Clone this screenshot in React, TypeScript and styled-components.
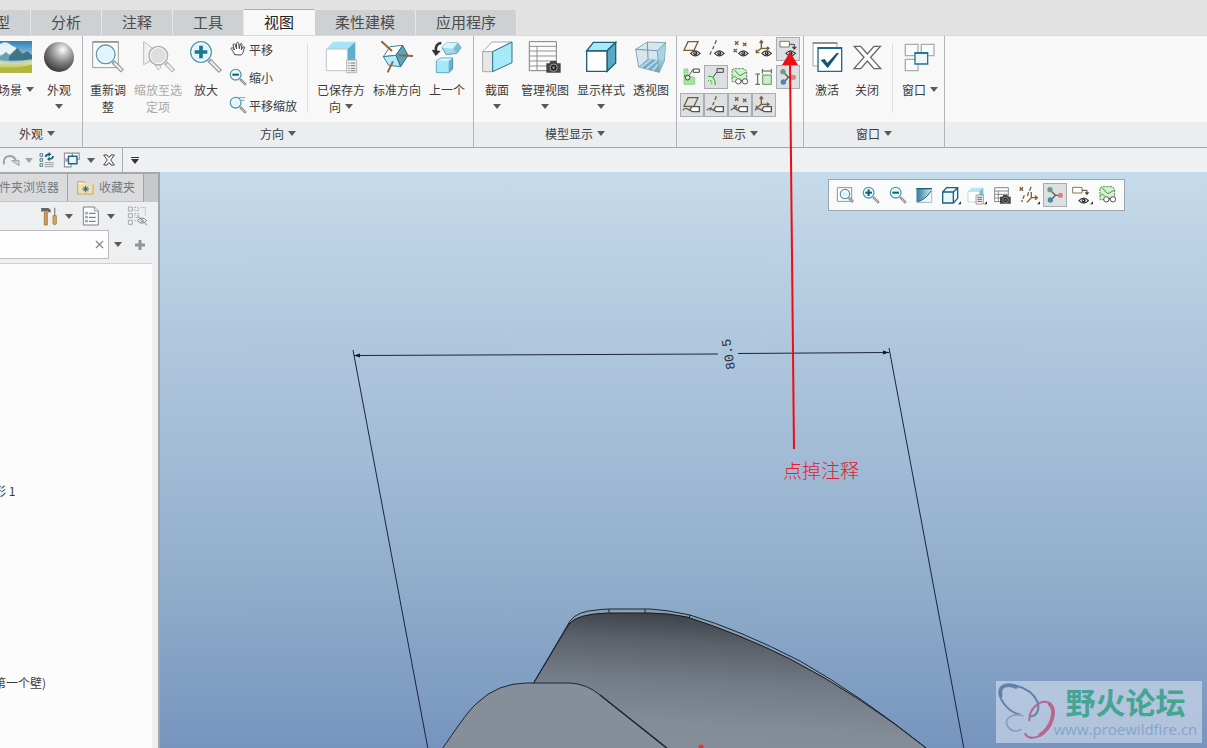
import React from 'react';
import styled, { createGlobalStyle, css } from 'styled-components';

const GlobalStyle = createGlobalStyle`
  *, *::before, *::after { box-sizing: border-box; }
  body {
    margin: 0;
    overflow: hidden;
    background: #e2e2e2;
    font-family: "Noto Sans CJK SC", "Noto Sans", sans-serif;
    font-size: 12px;
    color: #3c3c3c;
  }
  button, input {
    font: inherit;
    color: inherit;
    margin: 0;
    padding: 0;
    border: 0;
    border-radius: 0;
    background: none;
  }
  svg { display: block; flex: none; }
`;

/* ---------- layout ---------- */

const Page = styled.div`
  display: flex;
  flex-direction: column;
  min-height: 100vh;
`;

const TabBar = styled.nav`
  display: flex;
  align-items: flex-end;
  height: 35px;
  background: #e2e2e2;
`;

const RibbonTab = styled.button<{ $width: number; $active?: boolean; $cut?: boolean }>`
  display: flex;
  justify-content: ${p => (p.$cut ? 'flex-end' : 'center')};
  align-items: center;
  flex: none;
  width: ${p => p.$width}px;
  height: ${p => (p.$active ? 26 : 25)}px;
  padding: 0 ${p => (p.$cut ? 20 : 0)}px 3px 0;
  overflow: hidden;
  white-space: nowrap;
  font-size: 15px;
  color: ${p => (p.$active ? '#222' : '#4c4c4c')};
  background: ${p => (p.$active ? '#f8f8f8' : '#cdd1d4')};
  border-right: 1px solid ${p => (p.$active ? '#f8f8f8' : '#e6e7e8')};
  border-top: ${p => (p.$active ? '1px solid #a9abae' : '0')};
`;

const Ribbon = styled.div`
  display: flex;
  height: 113px;
  background: linear-gradient(#f8f8f8 86px, #ecedef 86px);
  border-top: 1px solid #d6d8da;
  border-bottom: 1px solid #a2a4a8;
`;

const Group = styled.section<{ $cut?: boolean }>`
  display: flex;
  flex-direction: column;
  flex: none;
  margin-left: ${p => (p.$cut ? -8 : 0)}px;
  border-right: 1px solid #b1b4b8;
`;

const GroupBody = styled.div<{ $left: number; $right: number }>`
  display: flex;
  gap: 4px;
  height: 86px;
  padding: 0 ${p => p.$right}px 0 ${p => p.$left}px;
`;

const GroupTitle = styled.button`
  display: flex;
  align-items: center;
  justify-content: center;
  gap: 4px;
  height: 23px;
`;

const BigButton = styled.button<{ $width: number }>`
  display: flex;
  flex-direction: column;
  align-items: center;
  flex: none;
  width: ${p => p.$width}px;
  padding-top: 4px;
  line-height: 17px;
  &:disabled { color: #a9a9a9; }
`;

const BigLabel = styled.span`
  display: flex;
  flex-direction: column;
  align-items: center;
  padding-top: 7px;
  white-space: nowrap;
`;

const LabelLine = styled.span`
  display: flex;
  align-items: center;
  justify-content: center;
  gap: 4px;
  height: 17px;
`;

const SmallColumn = styled.div`
  display: flex;
  flex-direction: column;
  width: 70px;
`;

const SmallButton = styled.button`
  display: flex;
  align-items: center;
  gap: 2px;
  height: 28px;
  padding-bottom: 2px;
  white-space: nowrap;
`;

const Divider = styled.div`
  width: 1px;
  height: 70px;
  margin: 7px 4px 0;
  background: #dcdee0;
`;

const ToggleGrid = styled.div`
  display: grid;
  grid-template-columns: repeat(5, 24px);
  grid-auto-rows: 24px;
  row-gap: 4px;
  padding-top: 1px;
`;

const Toggle = styled.button<{ $on?: boolean }>`
  display: grid;
  place-items: center;
  width: 24px;
  height: 24px;
  ${p => p.$on && css`
    background: #dde0e3;
    box-shadow: inset 0 0 0 1px #a9acb0;
  `}
`;

const Anchor = styled.div`
  position: relative;
`;

const Pointer = styled.svg`
  position: absolute;
  top: 0;
  left: 0;
  z-index: 5;
  pointer-events: none;
`;

const PointerText = styled.span`
  position: absolute;
  top: 419px;
  left: 7px;
  z-index: 5;
  white-space: nowrap;
  font-size: 19px;
  line-height: 28px;
  font-weight: 300;
  color: #e0202c;
`;

const QuickBar = styled.div`
  display: flex;
  align-items: center;
  height: 24px;
  background: #eff0f2;
`;

const QuickButton = styled.button<{ $width: number }>`
  display: grid;
  place-items: center;
  flex: none;
  width: ${p => p.$width}px;
  height: 24px;
`;

const QuickDivider = styled.div`
  width: 1px;
  height: 24px;
  background: #a9acb0;
`;

const Workspace = styled.div`
  display: flex;
  flex: 1;
`;

const SidePanel = styled.aside`
  display: flex;
  flex-direction: column;
  flex: none;
  width: 160px;
  background: #eeeff1;
  border-top: 2px solid #a6a8ab;
  border-right: 2px solid #a3a6ab;
`;

const PanelTabs = styled.div`
  display: flex;
  height: 28px;
  background: #c6c9cc;
`;

const PanelTab = styled.button<{ $width: number }>`
  display: flex;
  align-items: center;
  justify-content: flex-end;
  gap: 5px;
  flex: none;
  width: ${p => p.$width}px;
  padding: 0 8px 2px 0;
  overflow: hidden;
  white-space: nowrap;
  color: #77797c;
  background: #dadbdd;
  border-right: 1px solid #9fa2a5;
  border-bottom: 1px solid #c0c2c5;
`;

const PanelTools = styled.div`
  display: flex;
  align-items: center;
  height: 28px;
  padding-left: 36px;
`;

const SearchRow = styled.div`
  display: flex;
  align-items: center;
  height: 29px;
`;

const SearchField = styled.div`
  display: flex;
  align-items: center;
  width: 109px;
  height: 29px;
  background: #fdfdfd;
  border: 1px solid #b9bbbe;
  border-left: 0;
`;

const SearchInput = styled.input`
  flex: 1;
  min-width: 0;
  height: 27px;
  outline: none;
`;

const Tree = styled.ul`
  flex: 1;
  margin: 4px 6px 0 0;
  padding: 215px 0 0;
  overflow: hidden;
  list-style: none;
  background: #fdfcfd;
  border-top: 1px solid #cfd1d3;
`;

const TreeItem = styled.li<{ $skip?: boolean }>`
  height: 24px;
  margin: ${p => (p.$skip ? 168 : 0)}px 0 0 -6px;
  line-height: 24px;
  white-space: nowrap;
`;

const Viewport = styled.main`
  position: relative;
  display: flex;
  flex: 1;
  min-width: 0;
  overflow: hidden;
  background: linear-gradient(#c6dbea, #b0c8de 28%, #a0bad5 52%, #8eabc9 74%, #7794bf);
`;

const Scene = styled.svg`
  flex: 1;
  min-width: 0;
`;

const FloatBar = styled.div`
  position: absolute;
  top: 7px;
  left: 668px;
  display: flex;
  align-items: center;
  width: 297px;
  height: 32px;
  padding: 0 3px;
  background: #f9fafa;
  border: 1px solid #9ba5b0;
`;

const FloatSlot = styled.div`
  display: flex;
  justify-content: center;
  flex: 1;
`;

const Watermark = styled.div`
  position: absolute;
  right: 5px;
  bottom: 5px;
  display: flex;
  width: 206px;
  height: 62px;
  background: rgba(228, 236, 248, 0.52);
`;

const WatermarkText = styled.div`
  display: flex;
  flex-direction: column;
  align-items: center;
  flex: 1;
  padding-right: 4px;
`;

const WatermarkName = styled.strong`
  font-size: 30px;
  line-height: 40px;
  font-weight: 700;
  color: #46a592;
`;

const WatermarkUrl = styled.a`
  font-family: "Open Sans", sans-serif;
  font-size: 15px;
  line-height: 17px;
  color: #86a3c9;
  text-decoration: none;
`;

/* ---------- icons ---------- */

const Caret = ({ color = '#5a5a5a' }: { color?: string }) => (
  <svg width="8" height="5" viewBox="0 0 8 5"><path d="M0 0h8L4 5z" fill={color} /></svg>
);

const Big = ({ children }: { children: React.ReactNode }) => (
  <svg width="34" height="34" viewBox="0 0 102 102">{children}</svg>
);

const Tile = ({ children }: { children: React.ReactNode }) => (
  <svg width="24" height="24" viewBox="0 0 72 72" fill="none">{children}</svg>
);

const Lens = ({ x, y, r, len, gray, fill }: { x: number; y: number; r: number; len: number; gray?: boolean; fill?: string }) => {
  const s = r * 0.72;
  const w = r > 20 ? 13 : 8;
  return (
    <g>
      <path d={`M${x + s + 2} ${y + s + 2}l${len} ${len}`} stroke={gray ? '#b0b0b0' : '#8f8f8f'} strokeWidth={w} />
      <path d={`M${x + s + 5} ${y + s + 5}l${len - 5} ${len - 5}`} stroke="#ececec" strokeWidth={w - 6} />
      <circle cx={x} cy={y} r={r} fill={fill ?? (gray ? '#dedede' : '#dff5fd')} stroke={gray ? '#adadad' : '#5a98ae'} strokeWidth={4} />
      <circle cx={x} cy={y} r={r - 4} fill="none" stroke="#fff" strokeWidth="3" opacity="0.8" />
    </g>
  );
};

const SceneIcon = () => (
  <Big>
    <defs>
      <linearGradient id="sky" x2="0" y2="1"><stop stopColor="#2d7fb8" /><stop offset="1" stopColor="#cdeaf5" /></linearGradient>
      <linearGradient id="field" x2="0" y2="1"><stop stopColor="#dfe5a6" /><stop offset="1" stopColor="#a3b13c" /></linearGradient>
    </defs>
    <path d="M3 3h96v66H3z" fill="url(#sky)" />
    <path d="M3 12q18-12 34 4l16 8-10 20H3z" fill="#fff" opacity="0.85" />
    <path d="M3 50l18-14 10 8 24-20 18 16 12-6 14 12v26H3z" fill="#6a9fae" />
    <path d="M30 52l25-28 14 18 16-8 14 12v20H30z" fill="#3f7486" />
    <path d="M3 60q40 6 96-2v14H3z" fill="#a9cfd9" />
    <path d="M3 65q45 8 96-1v35H3z" fill="url(#field)" />
    <path d="M3 82q50 4 96-8v25H3z" fill="#b0b63f" />
  </Big>
);

const SphereIcon = () => (
  <Big>
    <defs>
      <radialGradient id="ball" cx="0.62" cy="0.26" r="0.75">
        <stop stopColor="#fff" /><stop offset="0.25" stopColor="#c4c4c4" /><stop offset="0.6" stopColor="#7c7c7c" /><stop offset="1" stopColor="#3a3a3a" />
      </radialGradient>
    </defs>
    <circle cx="51" cy="51" r="45" fill="url(#ball)" />
  </Big>
);

const RefitIcon = () => (
  <Big>
    <path d="M5 5h77v78H5z" fill="#fafafa" stroke="#9c9c9c" strokeWidth="3" />
    <path d="M5 6h77" stroke="#8a8a8a" strokeWidth="4" />
    <Lens x={44} y={43} r={28} len={28} />
  </Big>
);

const ZoomSelectedIcon = () => (
  <Big>
    <path d="M8 5l60 44-22 4 14 30-9 7-17-30L8 74z" fill="#f0f0f0" stroke="#bcbcbc" strokeWidth="3" />
    <Lens x={52} y={47} r={28} len={24} gray />
  </Big>
);

const ZoomInIcon = () => (
  <Big>
    <Lens x={36} y={36} r={31} len={34} />
    <path d="M36 17v38M17 36h38" stroke="#1f7590" strokeWidth="11" />
  </Big>
);

const SavedIcon = () => (
  <Big>
    <path d="M7 27L28 5h66L70 27z" fill="#a5e4f4" />
    <path d="M70 27L94 5v64L70 92z" fill="#5fb0cc" />
    <path d="M7 27h63v65H7z" fill="#fefefe" stroke="#b9c6cf" strokeWidth="3" />
    <path d="M68 60h30v38H68z" fill="#f2f2f2" stroke="#999" strokeWidth="2" />
    <path d="M73 69h4M80 69h14M73 77h4M80 77h14M73 85h4M80 85h14M73 92h4M80 92h14" stroke="#777" strokeWidth="3" />
  </Big>
);

const StandardIcon = () => (
  <Big>
    <path d="M10 50L30 20l38-4-20 30z" fill="#fdfdfd" stroke="#3f8297" strokeWidth="3" strokeLinejoin="round" />
    <path d="M10 50l38-4 14 34-36-4z" fill="#b4ebf9" stroke="#3f8297" strokeWidth="3" strokeLinejoin="round" />
    <path d="M48 46l20-30 16 30-22 34z" fill="#5ba3bc" stroke="#2b6f87" strokeWidth="3" strokeLinejoin="round" />
    <path d="M4 4l32 29M56 46l43 2M39 64L23 97" stroke="#8a6a3c" strokeWidth="6" />
  </Big>
);

const PreviousIcon = () => (
  <Big>
    <path d="M34 9Q16 10 17 34" fill="none" stroke="#333" strokeWidth="8" />
    <path d="M5 29l27 4-15 15z" fill="#333" />
    <path d="M36 23l15-16 32 2 10 14-12 17-32 4z" fill="#9fdcf1" stroke="#5d9fb5" strokeWidth="3" />
    <path d="M36 23l15-16 32 2-14 17z" fill="#d5f3fb" />
    <path d="M69 26l14-17 10 14-12 17z" fill="#7bbdd4" />
    <path d="M19 63l14-9h35v33L56 98H19z" fill="#68b2cb" stroke="#4696b0" strokeWidth="3" />
    <path d="M20 63h36v34H20z" fill="#a5e8fa" />
    <path d="M20 63l13-8h34l-11 8z" fill="#d3f4fc" />
  </Big>
);

const SectionIcon = () => (
  <Big>
    <path d="M8 35L36 6h60L38 35z" fill="#fdfdfd" stroke="#a5a9ac" strokeWidth="3" />
    <path d="M8 35h30v60H8z" fill="#e8e6e4" stroke="#a5a9ac" strokeWidth="3" />
    <path d="M38 35L96 6v62L38 95z" fill="#a5e9fb" stroke="#2f6f85" strokeWidth="3" />
  </Big>
);

const CameraShape = ({ x, y, k = 1 }: { x: number; y: number; k?: number }) => (
  <g transform={`translate(${x} ${y}) scale(${k})`}>
    <path d="M0 7h9l4-7h16l4 7h10v28H0z" fill="#444" />
    <circle cx="22" cy="20" r="11" fill="#222" stroke="#aaa" strokeWidth="3" />
    <circle cx="22" cy="20" r="4" fill="#888" />
  </g>
);

const ManageIcon = () => (
  <Big>
    <path d="M4 5h81v87H4z" fill="#fcfcfc" stroke="#7c8085" strokeWidth="3" />
    <path d="M4 19h81M4 33h81M4 48h81M4 63h81M4 78h60M27 19v73" stroke="#8d9195" strokeWidth="3" />
    <CameraShape x={55} y={63} />
  </Big>
);

const DisplayIcon = () => (
  <Big>
    <path d="M8 33L28 7h67L69 33z" fill="#a5e9fb" stroke="#225f75" strokeWidth="4" />
    <path d="M69 33L95 7v62L69 94z" fill="#58a9c4" stroke="#225f75" strokeWidth="4" />
    <path d="M8 33h61v61H8z" fill="#fff" stroke="#225f75" strokeWidth="4" />
  </Big>
);

const PerspectiveIcon = () => (
  <Big>
    <path d="M5 28L40 6l55 2-4 55-15 34-62-16z" fill="#d5e6ee" stroke="#8aa5b3" strokeWidth="3" />
    <path d="M14 80l28-24 47 6-13 35z" fill="#5c9cb5" opacity="0.8" />
    <path d="M20 82l32-24M38 86l32-26M56 91l26-30" stroke="#b7d7e4" strokeWidth="6" />
    <path d="M5 28l65 4 25-24M70 32l6 65M40 6l2 50" fill="none" stroke="#7696a6" strokeWidth="3" />
    <path d="M70 32l25-24-4 55-15 34z" fill="#8ecbdf" opacity="0.65" />
  </Big>
);

const ActivateIcon = () => (
  <Big>
    <path d="M9 8h72v70H9z" fill="#fff" stroke="#a4a6a8" strokeWidth="3" />
    <path d="M8 9h74" stroke="#909294" strokeWidth="6" />
    <path d="M24 23h71v71H24z" fill="#fff" stroke="#1f6a87" strokeWidth="4" />
    <path d="M23 24h73" stroke="#1f6a87" strokeWidth="6" />
    <path d="M32 60l12-3 8 12 28-30h7L53 85z" fill="#15536f" />
  </Big>
);

const CloseIcon = () => (
  <Big>
    <path d="M13 19h19l20 23 20-23h19L62 52l30 34H72L52 63 32 86H12l30-34z" fill="#fff" stroke="#666" strokeWidth="4" />
  </Big>
);

const WindowsShape = () => (
  <g fill="#fbfbfb" strokeWidth="4">
    <path d="M7 13h38v34H7zM55 13h38v34H55zM7 58h38v34H7z" stroke="#aaadb0" />
    <path d="M36 38h38v34H36z" fill="#eaf7fc" stroke="#2a738e" />
    <path d="M35 39h40" stroke="#2a738e" strokeWidth="6" />
  </g>
);

const HandIcon = () => (
  <svg width="18" height="18" viewBox="-3 -3 54 54" fill="#fff" stroke="#444" strokeWidth="3" strokeLinejoin="round">
    <path d="M14 41C12 34 6 28 3 22c2-4 6-2 10 5L9 11c2-4 6-3 7 1l4 12-1-17c2-4 6-4 7 0l2 16 3-14c3-3 6-1 5 2l-2 15 5-8c4-2 6 0 4 3-3 10-4 17-10 21z" />
  </svg>
);

const SmallLens = ({ kind }: { kind: 'in' | 'out' | 'pan' | 'fit' }) => (
  <svg width="18" height="18" viewBox="0 0 54 54" fill="none">
    {kind === 'fit' && <path d="M4 5h43v41H4z" fill="#fff" stroke="#8e9194" strokeWidth="3" />}
    <Lens x={kind === 'fit' ? 27 : 20} y={kind === 'fit' ? 24 : 20} r={kind === 'fit' ? 14 : 16} len={kind === 'fit' ? 12 : 17} />
    {kind === 'pan' && <path d="M27 5h22M32 13h14" stroke="#6fb0c8" strokeWidth="3" />}
    {(kind === 'out' || kind === 'in') && <path d="M10 20h20" stroke="#14607a" strokeWidth="6" />}
    {kind === 'in' && <path d="M20 10v20" stroke="#14607a" strokeWidth="6" />}
  </svg>
);

const Eye = ({ x, y }: { x: number; y: number }) => (
  <g transform={`translate(${x} ${y})`}>
    <path d="M-14 0Q0-15 14 0Q0 15-14 0z" fill="#fff" stroke="#3c3c3c" strokeWidth="4" />
    <circle r="6" fill="#2c2c2c" /><circle cx="-1" cy="-1" r="2" fill="#fff" />
  </g>
);

const Tag = () => (
  <g strokeWidth="4">
    <path d="M8 52q9-10 16-3t14 0" stroke="#666" />
    <path d="M36 41h22v15H36l-6-7z" fill="#fff" stroke="#555" />
  </g>
);

const Plane = () => <path d="M24 14h30L42 40H12z" stroke="#7b5f38" strokeWidth="4" />;
const Axis = () => <path d="M37 10l-4 11M30 27l-4 10M22 43l-4 10" stroke="#7b5f38" strokeWidth="4" />;
const Points = () => <path d="M21 13l10 10m0-10L21 23M45 17l10 10m0-10L45 27M17 36l10 10m0-10L17 46" stroke="#7b5f38" strokeWidth="4" />;
const Csys = () => <path d="M28 12v22L12 46M28 34h22M23 18l5-7 5 7M45 29l6 5-6 5M13 38v9h9" stroke="#7b5f38" strokeWidth="4" />;

const Glasses = () => (
  <g fill="#fff" stroke="#555" strokeWidth="3"><circle cx="31" cy="49" r="8" /><circle cx="51" cy="49" r="8" /><path d="M39 46h4" /></g>
);
const GreenModel = () => (
  <Tile>
    <path d="M12 15l6-4h31l7 8v31H12z" fill="#d3f1cf" stroke="#57855a" strokeWidth="3" strokeDasharray="7 3" />
    <path d="M12 38q8-8 14 0M26 24l10 8 18-10M18 14l10 10" stroke="#4c9452" strokeWidth="3" />
    <Glasses />
  </Tile>
);
const SpinTile = () => (
  <Tile>
    <path d="M20 19l17 18-13 14M37 37h15" stroke="#555" strokeWidth="4" />
    <circle cx="21" cy="20" r="8" fill="#6f9d84" /><circle cx="22" cy="51" r="8" fill="#4589ab" /><circle cx="52" cy="37" r="8" fill="#d48580" />
  </Tile>
);
const NoteTile = () => (
  <Tile>
    <path d="M12 13h28v17H12z" fill="#fff" stroke="#91754c" strokeWidth="3" />
    <path d="M40 22h15v10" stroke="#444" strokeWidth="3" /><path d="M47 29h16l-8 10z" fill="#444" />
    <Eye x={44} y={49} />
  </Tile>
);
const WeldTile = () => (
  <Tile>
    <path d="M12 12h12v20l20 6v20H12z" fill="#a6e6a2" stroke="#79bd77" strokeWidth="2" />
    <path d="M12 33h14l13-20" stroke="#555" strokeWidth="3" /><circle cx="23" cy="38" r="7" fill="#d8f5d5" stroke="#444" strokeWidth="3" />
    <path d="M40 12h18v10H40z" fill="#fff" stroke="#444" strokeWidth="3" />
  </Tile>
);
const CurveTile = () => (
  <Tile>
    <path d="M12 34h22v26H22V46H12z" fill="#c9efc5" />
    <path d="M12 34q22-3 22 26" stroke="#3d9a43" strokeWidth="3" /><path d="M12 47h11v12" stroke="#4a9c50" strokeWidth="3" strokeDasharray="3 3" />
    <path d="M27 37l12-17V11h19v11H39" stroke="#444" strokeWidth="3" />
  </Tile>
);
const SizeTile = () => (
  <Tile>
    <path d="M32 30h26v28H32z" fill="#c7efc2" stroke="#6c8e6b" strokeWidth="3" />
    <path d="M10 27h14M10 58h14M17 28v29M31 18h27M31 12v14M58 12v14" stroke="#555" strokeWidth="3" />
  </Tile>
);
const Corner = () => <path d="M60 64h9v-9z" fill="#333" />;

const Pairs = {
  shade: <Tile><defs><linearGradient id="shade"><stop stopColor="#2c7a97" /><stop offset="1" stopColor="#d7edf5" /></linearGradient></defs><path d="M14 17h45v41H14z" fill="url(#shade)" stroke="#8aa" strokeWidth="2" /><path d="M16 56q24-5 41-34v34z" fill="#f3fafd" /><path d="M18 55q22-4 39-31" stroke="#235f78" strokeWidth="3" /><path d="M13 17h47" stroke="#245f77" strokeWidth="4" /></Tile>,
  cube: <Tile><path d="M14 27l12-13h33v32L46 60H14zM14 27h32v33M46 27l13-13" fill="#e9f8fd" stroke="#1f6078" strokeWidth="4" /><Corner /></Tile>,
  saved: <Tile><path d="M12 25l12-11h34L46 25z" fill="#b9e6f3" /><path d="M46 25l12-11v36L46 57z" fill="#7abdd2" /><path d="M12 25h34v32H12z" fill="#fff" stroke="#b4c5cd" strokeWidth="2" /><path d="M36 36h22v27H36z" fill="#f4f4f4" stroke="#777" strokeWidth="2" /><path d="M40 43h14M40 49h14M40 55h14" stroke="#666" strokeWidth="3" /><Corner /></Tile>,
  table: <Tile><path d="M11 14h41v42H11zM11 24h41M11 34h41M11 45h41M22 24v32" fill="#fff" stroke="#888" strokeWidth="3" /><CameraShape x={27} y={36} k={0.75} /></Tile>,
  datum: <Tile><path d="M8 13l10 10m0-10L8 23M42 11l-4 12M35 28l-4 11M22 37l-4 10M16 51l-2 6M43 27v17L30 58M43 44h17M54 38l7 6-7 6" stroke="#7b5f38" strokeWidth="4" /><Corner /></Tile>,
};

const DropX = () => (
  <svg width="14" height="14" viewBox="0 0 42 42"><path d="M5 6h10l6 8 6-8h10L26 21l11 15H27l-6-8-6 8H5l11-15z" fill="#fff" stroke="#444" strokeWidth="3" /></svg>
);

/* ---------- parts ---------- */

type BigItemProps = { icon: React.ReactNode; lines: string[]; width: number; caret?: 'inline' | 'below'; disabled?: boolean };

const BigItem = ({ icon, lines, width, caret, disabled }: BigItemProps) => (
  <BigButton $width={width} disabled={disabled}>
    {icon}
    <BigLabel>
      {lines.map((line, i) => (
        <LabelLine key={line}>{line}{caret === 'inline' && i === lines.length - 1 && <Caret />}</LabelLine>
      ))}
      {caret === 'below' && <LabelLine><Caret /></LabelLine>}
    </BigLabel>
  </BigButton>
);

const tabs = [
  { name: '模型', width: 31, cut: true },
  { name: '分析', width: 71 },
  { name: '注释', width: 71 },
  { name: '工具', width: 71 },
  { name: '视图', width: 71, active: true },
  { name: '柔性建模', width: 101 },
  { name: '应用程序', width: 101 },
];

const toggles: { name: string; icon: React.ReactNode; on?: boolean; pointed?: boolean }[] = [
  { name: '平面显示', icon: <Tile><Plane /><Eye x={46} y={49} /></Tile> },
  { name: '轴显示', icon: <Tile><Axis /><Eye x={46} y={49} /></Tile> },
  { name: '点显示', icon: <Tile><Points /><Eye x={46} y={49} /></Tile> },
  { name: '坐标系显示', icon: <Tile><Csys /><Eye x={44} y={49} /></Tile> },
  { name: '注释显示', icon: <NoteTile />, on: true, pointed: true },
  { name: '焊缝', icon: <WeldTile /> },
  { name: '曲线', icon: <CurveTile />, on: true },
  { name: '模型', icon: <GreenModel /> },
  { name: '尺寸', icon: <SizeTile /> },
  { name: '旋转中心', icon: <SpinTile />, on: true },
  { name: '平面标记', icon: <Tile><Plane /><Tag /></Tile>, on: true },
  { name: '轴标记', icon: <Tile><Axis /><Tag /></Tile>, on: true },
  { name: '点标记', icon: <Tile><Points /><Tag /></Tile>, on: true },
  { name: '坐标系标记', icon: <Tile><Csys /><Tag /></Tile>, on: true },
];

const floatTools: { name: string; icon: React.ReactNode; on?: boolean }[] = [
  { name: '重新调整', icon: <SmallLens kind="fit" /> },
  { name: '放大', icon: <SmallLens kind="in" /> },
  { name: '缩小', icon: <SmallLens kind="out" /> },
  { name: '重画', icon: Pairs.shade },
  { name: '显示样式', icon: Pairs.cube },
  { name: '已保存方向', icon: Pairs.saved },
  { name: '视图管理器', icon: Pairs.table },
  { name: '基准显示', icon: Pairs.datum },
  { name: '旋转中心', icon: <SpinTile />, on: true },
  { name: '注释显示', icon: <Tile><path d="M8 13h28v17H8z" fill="#fff" stroke="#91754c" strokeWidth="3" /><path d="M36 22h15v10" stroke="#444" strokeWidth="3" /><path d="M44 28h14l-7 9z" fill="#444" /><Eye x={41} y={53} /><Corner /></Tile> },
  { name: '模型显示', icon: <GreenModel /> },
];

const ModelScene = () => (
  <Scene viewBox="160 172 1047 576" preserveAspectRatio="xMinYMin slice">
    <defs>
      <linearGradient id="back" gradientUnits="userSpaceOnUse" x1="640" y1="609" x2="632" y2="748">
        <stop stopColor="#3b4047" /><stop offset="0.22" stopColor="#5a616a" /><stop offset="0.5" stopColor="#737b86" /><stop offset="0.8" stopColor="#828b96" /><stop offset="1" stopColor="#868f99" />
      </linearGradient>
    </defs>
    <path d="M533 684L570 621Q577 611 597 610Q604 609 610 609H650Q668 610 690 615Q740 630 800 661Q860 695 930 751H533z" fill="#8c9fb2" />
    <path d="M533 684L569 624Q577 614 607 613H650Q668 613 687 617Q740 634 790 659Q860 695 930 751H533z" fill="url(#back)" stroke="#15191f" />
    <path d="M533 684L570 621Q577 611 597 610Q604 609 610 609H650Q668 610 690 615Q740 630 800 661Q860 695 930 751" fill="none" stroke="#1b2734" />
    <path d="M609 609v4M645 609v4M690 615l-1 3" stroke="#1b2734" />
    <path d="M442 749C455 731 466 713 477 703Q498 683 527 683H570Q587 684 600 695L668 749z" fill="#858e99" />
    <path d="M442 749C455 731 466 713 477 703Q498 683 527 683H570Q587 684 600 695L668 749" fill="none" stroke="#1e2630" />
    <path d="M600 695l68 54" stroke="#1e2630" strokeWidth="1.5" />
    <g stroke="#1c2440" fill="none">
      <path d="M353 350l75 399M889 348l75 401M354 355.500L718 354M738 353.500L889 352.500" />
    </g>
    <path d="M354 355.500l6-2v4zM889 352.500l-6-2v4z" fill="#0d1430" />
    <text transform="translate(735 369) rotate(-99)" fontFamily="Liberation Mono, monospace" fontSize="13" fill="#232e44">80.5</text>
    <circle cx="701" cy="747" r="2.500" fill="#e8304a" />
  </Scene>
);

export default function App() {
  return (
    <Page>
      <GlobalStyle />
      <TabBar>
        {tabs.map(t => (
          <RibbonTab key={t.name} $width={t.width} $active={t.active} $cut={t.cut}>{t.name}</RibbonTab>
        ))}
      </TabBar>

      <Ribbon>
        <Group $cut>
          <GroupBody $left={4} $right={4}>
            <BigItem icon={<SceneIcon />} lines={['场景']} width={40} caret="inline" />
            <BigItem icon={<SphereIcon />} lines={['外观']} width={38} caret="below" />
          </GroupBody>
          <GroupTitle>外观<Caret /></GroupTitle>
        </Group>

        <Group>
          <GroupBody $left={4} $right={7}>
            <BigItem icon={<RefitIcon />} lines={['重新调', '整']} width={42} />
            <BigItem icon={<ZoomSelectedIcon />} lines={['缩放至选', '定项']} width={50} disabled />
            <BigItem icon={<ZoomInIcon />} lines={['放大']} width={38} />
            <SmallColumn>
              <SmallButton><HandIcon />平移</SmallButton>
              <SmallButton><SmallLens kind="out" />缩小</SmallButton>
              <SmallButton><SmallLens kind="pan" />平移缩放</SmallButton>
            </SmallColumn>
            <Divider />
            <BigItem icon={<SavedIcon />} lines={['已保存方', '向']} width={50} caret="inline" />
            <BigItem icon={<StandardIcon />} lines={['标准方向']} width={54} />
            <BigItem icon={<PreviousIcon />} lines={['上一个']} width={38} />
          </GroupBody>
          <GroupTitle>方向<Caret /></GroupTitle>
        </Group>

        <Group>
          <GroupBody $left={6} $right={4}>
            <BigItem icon={<SectionIcon />} lines={['截面']} width={34} caret="below" />
            <BigItem icon={<ManageIcon />} lines={['管理视图']} width={54} caret="below" />
            <BigItem icon={<DisplayIcon />} lines={['显示样式']} width={50} caret="below" />
            <BigItem icon={<PerspectiveIcon />} lines={['透视图']} width={42} />
          </GroupBody>
          <GroupTitle>模型显示<Caret /></GroupTitle>
        </Group>

        <Group>
          <GroupBody $left={3} $right={3}>
            <ToggleGrid>
              {toggles.map(t => (
                <Anchor key={t.name}>
                  <Toggle $on={t.on} aria-label={t.name} aria-pressed={!!t.on}>{t.icon}</Toggle>
                  {t.pointed && (
                    <>
                      <Pointer width="24" height="413" viewBox="0 0 24 413">
                        <path d="M14 26L18 412" stroke="#f00c14" strokeWidth="2" />
                        <path d="M14 15l8 13H6z" fill="#f00c14" />
                      </Pointer>
                      <PointerText>点掉注释</PointerText>
                    </>
                  )}
                </Anchor>
              ))}
            </ToggleGrid>
          </GroupBody>
          <GroupTitle>显示<Caret /></GroupTitle>
        </Group>

        <Group>
          <GroupBody $left={4} $right={5}>
            <BigItem icon={<ActivateIcon />} lines={['激活']} width={38} />
            <BigItem icon={<CloseIcon />} lines={['关闭']} width={34} />
            <Divider />
            <BigItem icon={<Big><WindowsShape /></Big>} lines={['窗口']} width={38} caret="inline" />
          </GroupBody>
          <GroupTitle>窗口<Caret /></GroupTitle>
        </Group>
      </Ribbon>

      <QuickBar>
        <QuickButton $width={22} aria-label="重做">
          <svg width="18" height="14" viewBox="0 0 54 42"><path d="M6 34Q2 10 24 9Q38 10 42 24" fill="none" stroke="#9ea1a4" strokeWidth="6" /><path d="M29 23h22v15z" fill="#d5d7d9" stroke="#9ea1a4" strokeWidth="3" /></svg>
        </QuickButton>
        <QuickButton $width={13} aria-label="重做列表"><Caret color="#a5a5a5" /></QuickButton>
        <QuickButton $width={24} aria-label="重新生成">
          <svg width="16" height="16" viewBox="0 0 48 48" fill="none"><path d="M3 5h8v8H3zM3 20h8v8H3zM3 35h8v8H3z" stroke="#4a8295" strokeWidth="3" /><path d="M17 32h27M17 38h27M17 44h27" stroke="#777" strokeWidth="2" /><path d="M20 15q0-8 10-8M42 12q0 9-11 9" stroke="#155c78" strokeWidth="5" /><path d="M29 0v14l8-7zM32 14v14l-8-7z" fill="#155c78" /></svg>
        </QuickButton>
        <QuickButton $width={26} aria-label="窗口"><svg width="18" height="18" viewBox="0 0 102 102"><g strokeWidth="6" fill="#fff"><path d="M8 12h44v34H8zM54 12h38v34H54zM8 56h38v34H8z" stroke="#8b9094" /><path d="M31 30h48v42H31z" fill="#e6f6fc" stroke="#22647e" strokeWidth="8" /></g></svg></QuickButton>
        <QuickButton $width={11} aria-label="窗口列表"><Caret /></QuickButton>
        <QuickButton $width={26} aria-label="关闭"><DropX /></QuickButton>
        <QuickDivider />
        <QuickButton $width={23} aria-label="自定义"><svg width="8" height="7" viewBox="0 0 8 7"><path d="M0 0h8v1H0zM0 2h8L4 7z" fill="#333" /></svg></QuickButton>
      </QuickBar>

      <Workspace>
        <SidePanel>
          <PanelTabs>
            <PanelTab $width={68}>文件夹浏览器</PanelTab>
            <PanelTab $width={76}>
              <svg width="17" height="16" viewBox="0 0 51 48"><path d="M2 8h18l4 6h24v31H2z" fill="#f4e1b0" stroke="#c9a765" strokeWidth="3" /><path d="M3 14h44" stroke="#fff" strokeWidth="2" /><path d="M26 20v20M16 30h20M19 23l14 14M33 23L19 37" stroke="#1d6480" strokeWidth="3" /></svg>
              收藏夹
            </PanelTab>
          </PanelTabs>
          <PanelTools>
            <QuickButton $width={25} aria-label="设置">
              <svg width="18" height="20" viewBox="0 0 54 60"><path d="M3 6h22l7 5v8H24v-4H12l-8 3z" fill="#666" /><path d="M13 17h9v40h-9z" fill="#d99a4e" stroke="#8d6532" strokeWidth="2" /><path d="M42 5h4v24h-4z" fill="#888" /><path d="M39 29h10v24q-5 7-10 0z" fill="#e0a65c" stroke="#8d6532" strokeWidth="2" /></svg>
            </QuickButton>
            <QuickButton $width={16} aria-label="设置列表"><Caret /></QuickButton>
            <QuickButton $width={28} aria-label="显示">
              <svg width="18" height="20" viewBox="0 0 54 60"><path d="M4 3h33l12 12v42H4z" fill="#fbfcfd" stroke="#75828a" strokeWidth="3" /><path d="M37 3v12h12" fill="#d8e5ea" stroke="#75828a" strokeWidth="2" /><path d="M21 22h20M21 34h20M21 46h20" stroke="#666" strokeWidth="3" /><path d="M11 19h5v5h-5zM11 31h5v5h-5zM11 43h5v5h-5z" fill="#fff" stroke="#666" strokeWidth="2" /></svg>
            </QuickButton>
            <QuickButton $width={12} aria-label="显示列表"><Caret /></QuickButton>
            <QuickButton $width={40} aria-label="树过滤">
              <svg width="21" height="20" viewBox="0 0 63 60" fill="none" stroke="#a5a7a9" strokeWidth="3"><path d="M4 3h12v12H4zM4 23h12v12H4zM4 43h12v12H4z" /><path d="M23 4h12v10H23zM41 4h14v24M23 23h12v12H23zM23 44h9" strokeDasharray="4 3" /><path d="M31 44q14-16 28 0q-14 15-28 0zM31 29l29 29" stroke="#85878a" /><circle cx="45" cy="44" r="4" /></svg>
            </QuickButton>
          </PanelTools>
          <SearchRow>
            <SearchField>
              <SearchInput type="text" aria-label="搜索" />
              <QuickButton $width={18} aria-label="清除"><svg width="9" height="9" viewBox="0 0 9 9"><path d="M1 1l7 7M8 1L1 8" stroke="#888" strokeWidth="1.300" /></svg></QuickButton>
            </SearchField>
            <QuickButton $width={18} aria-label="搜索选项"><Caret /></QuickButton>
            <QuickButton $width={25} aria-label="添加"><svg width="12" height="12" viewBox="0 0 12 12"><path d="M6 1v10M1 6h10" stroke="#929496" strokeWidth="3" /></svg></QuickButton>
          </SearchRow>
          <Tree>
            <TreeItem>形 1</TreeItem>
            <TreeItem $skip>第一个壁)</TreeItem>
          </Tree>
        </SidePanel>

        <Viewport>
          <ModelScene />
          <FloatBar>
            {floatTools.map(t => (
              <FloatSlot key={t.name}><Toggle $on={t.on} aria-label={t.name}>{t.icon}</Toggle></FloatSlot>
            ))}
          </FloatBar>
          <Watermark>
            <svg width="57" height="62" viewBox="0 0 171 186" fill="none" strokeLinecap="round" overflow="visible">
              <path d="M70 100C34 92 4 50 12 26C24 0 100 10 124 62C134 90 118 106 104 106" stroke="#5f82aa" strokeWidth="6" />
              <path d="M14 44C6 10 40 8 60 18" stroke="#5f82aa" strokeWidth="11" />
              <path d="M80 104C50 96 24 112 34 134C42 150 60 154 74 146" stroke="#8a9dc0" strokeWidth="5" />
              <path d="M100 118C98 86 130 56 156 64C188 80 172 144 128 166C104 176 90 166 88 158" stroke="#b06a8e" strokeWidth="6" />
              <path d="M160 68C184 90 166 140 132 162" stroke="#b8678a" strokeWidth="11" />
            </svg>
            <WatermarkText>
              <WatermarkName>野火论坛</WatermarkName>
              <WatermarkUrl href="#">www.proewildfire.cn</WatermarkUrl>
            </WatermarkText>
          </Watermark>
        </Viewport>
      </Workspace>
    </Page>
  );
}
